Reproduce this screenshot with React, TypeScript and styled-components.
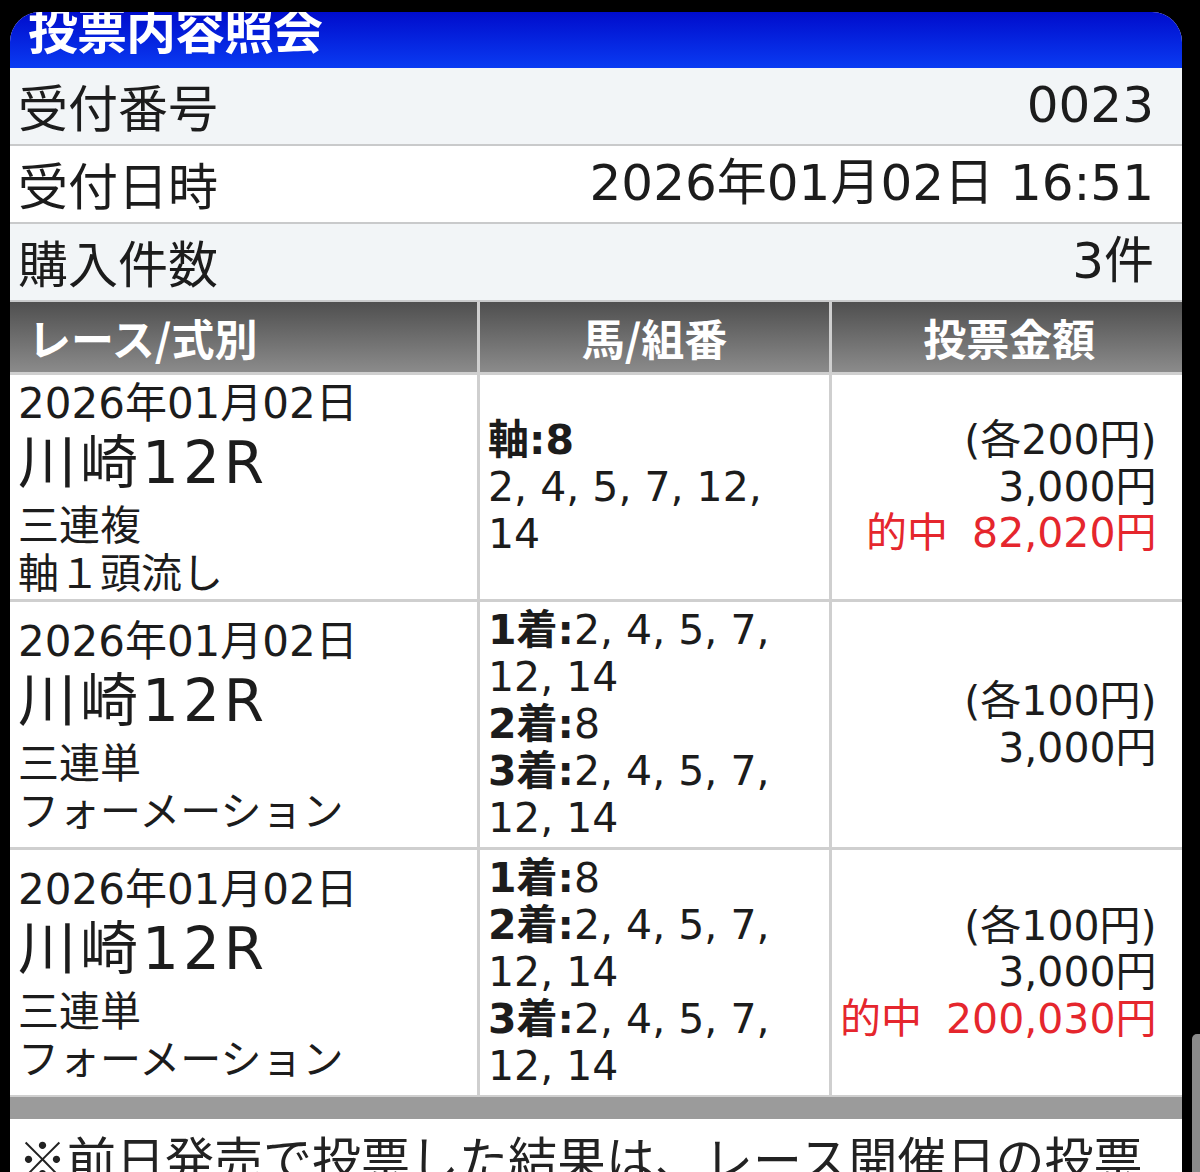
import React from "react";
import styled, { createGlobalStyle } from "styled-components";

const LATIN = `"DejaVu Sans", "Noto Sans CJK JP", sans-serif`;
const JP = `"Noto Sans CJK JP", sans-serif`;

const Global = createGlobalStyle`
  html, body {
    margin: 0;
    padding: 0;
    background: #000;
    overflow: hidden;
  }
  #root {
    height: 1172px;
    overflow: hidden;
  }
`;

const Screen = styled.div`
  position: relative;
  height: 1172px;
  padding: 12px 18px 0 10px;
  box-sizing: border-box;
  background: #000;
`;

const Panel = styled.div`
  width: 1172px;
  background: #fff;
  border-radius: 30px 30px 0 0;
  overflow: hidden;
  color: #1c1c1c;
`;

const TitleBar = styled.div`
  height: 56px;
  overflow: hidden;
  background: linear-gradient(#000ccc, #0a3bf2);
`;

const Title = styled.h1`
  margin: -11px 0 0 18px;
  font-family: ${JP};
  font-size: 50px;
  line-height: 52px;
  font-weight: 700;
  color: #fff;
  letter-spacing: -1px;
`;

const InfoRow = styled.div<{ $shade?: boolean }>`
  height: 76px;
  display: flex;
  align-items: center;
  justify-content: space-between;
  padding: 0 28px 0 8px;
  background: ${(p) => (p.$shade ? "#f2f5f7" : "#fff")};
  border-bottom: 2px solid #c9cacb;
`;

const InfoLabel = styled.span`
  font-family: ${JP};
  font-size: 50px;
  line-height: 1;
  margin-top: -3px;
`;

const InfoValue = styled.span`
  font-family: ${LATIN};
  font-size: 50px;
  line-height: 1;
  margin-top: -3px;
`;

const Table = styled.div`
  display: grid;
  grid-template-columns: 467px 349px 1fr;
  gap: 3px;
  background: #cfcfcf;
  border-bottom: 2px solid #cfcfcf;
`;

const HeadCell = styled.div<{ $align?: "left" | "center" }>`
  height: 70px;
  display: flex;
  align-items: center;
  justify-content: ${(p) => (p.$align === "left" ? "flex-start" : "center")};
  padding: 0 ${(p) => (p.$align === "left" ? "18px" : "0")};
  background: linear-gradient(#4f4f4f, #8b8b8b);
  font-family: ${JP};
  font-size: 43px;
  font-weight: 700;
  color: #fff;
`;

const Cell = styled.div<{ $align?: "left" | "right" }>`
  display: flex;
  flex-direction: column;
  justify-content: center;
  align-items: ${(p) => (p.$align === "right" ? "flex-end" : "flex-start")};
  background: #fff;
  padding: ${(p) => (p.$align === "right" ? "6px 30px 6px 8px" : "5px 8px")};
`;

const RaceDate = styled.div`
  font-family: ${LATIN};
  font-size: 42px;
  line-height: 48px;
`;

const RaceName = styled.div`
  font-family: ${LATIN};
  font-size: 58px;
  line-height: 70px;
  letter-spacing: 4px;
`;

const BetType = styled.div`
  font-family: ${JP};
  font-size: 41px;
  line-height: 48px;
`;

const PickLine = styled.div`
  font-family: ${LATIN};
  font-size: 41px;
  line-height: 47px;
`;

const PickKey = styled.b`
  font-weight: 700;
`;

const AmountLine = styled.div<{ $hit?: boolean }>`
  font-family: ${LATIN};
  font-size: 41px;
  line-height: 46.5px;
  color: ${(p) => (p.$hit ? "#e5262d" : "#1c1c1c")};
  white-space: nowrap;
`;

const HitLabel = styled.span`
  margin-right: 24px;
`;

const Band = styled.div`
  height: 22px;
  background: #9b9b9b;
`;

const Note = styled.p`
  margin: 0;
  padding: 4px 8px 0;
  font-family: ${JP};
  font-size: 49px;
  line-height: 68px;
  white-space: nowrap;
  color: #222;
`;

const ScrollThumb = styled.div`
  position: absolute;
  right: 0;
  top: 1034px;
  width: 8px;
  height: 160px;
  border-radius: 5px 0 0 5px;
  background: #8a8a8a;
`;

type Pick = { key?: string; nums?: string };

type Bet = {
  date: string;
  race: string;
  type: string;
  method: string;
  picks: Pick[];
  unit: string;
  total: string;
  payout?: string;
};

const bets: Bet[] = [
  {
    date: "2026年01月02日",
    race: "川崎12R",
    type: "三連複",
    method: "軸１頭流し",
    picks: [{ key: "軸:8" }, { nums: "2, 4, 5, 7, 12, 14" }],
    unit: "(各200円)",
    total: "3,000円",
    payout: "82,020円",
  },
  {
    date: "2026年01月02日",
    race: "川崎12R",
    type: "三連単",
    method: "フォーメーション",
    picks: [
      { key: "1着:", nums: "2, 4, 5, 7, 12, 14" },
      { key: "2着:", nums: "8" },
      { key: "3着:", nums: "2, 4, 5, 7, 12, 14" },
    ],
    unit: "(各100円)",
    total: "3,000円",
  },
  {
    date: "2026年01月02日",
    race: "川崎12R",
    type: "三連単",
    method: "フォーメーション",
    picks: [
      { key: "1着:", nums: "8" },
      { key: "2着:", nums: "2, 4, 5, 7, 12, 14" },
      { key: "3着:", nums: "2, 4, 5, 7, 12, 14" },
    ],
    unit: "(各100円)",
    total: "3,000円",
    payout: "200,030円",
  },
];

export default function App() {
  return (
    <>
      <Global />
      <Screen>
        <Panel>
          <TitleBar>
            <Title>投票内容照会</Title>
          </TitleBar>

          <InfoRow $shade>
            <InfoLabel>受付番号</InfoLabel>
            <InfoValue>0023</InfoValue>
          </InfoRow>
          <InfoRow>
            <InfoLabel>受付日時</InfoLabel>
            <InfoValue>2026年01月02日 16:51</InfoValue>
          </InfoRow>
          <InfoRow $shade>
            <InfoLabel>購入件数</InfoLabel>
            <InfoValue>3件</InfoValue>
          </InfoRow>

          <Table>
            <HeadCell $align="left">レース/式別</HeadCell>
            <HeadCell>馬/組番</HeadCell>
            <HeadCell>投票金額</HeadCell>

            {bets.map((bet, i) => (
              <React.Fragment key={i}>
                <Cell>
                  <RaceDate>{bet.date}</RaceDate>
                  <RaceName>{bet.race}</RaceName>
                  <BetType>{bet.type}</BetType>
                  <BetType>{bet.method}</BetType>
                </Cell>
                <Cell>
                  {bet.picks.map((p, j) => (
                    <PickLine key={j}>
                      {p.key && <PickKey>{p.key}</PickKey>}
                      {p.nums}
                    </PickLine>
                  ))}
                </Cell>
                <Cell $align="right">
                  <AmountLine>{bet.unit}</AmountLine>
                  <AmountLine>{bet.total}</AmountLine>
                  {bet.payout && (
                    <AmountLine $hit>
                      <HitLabel>的中</HitLabel>
                      {bet.payout}
                    </AmountLine>
                  )}
                </Cell>
              </React.Fragment>
            ))}
          </Table>

          <Band />
          <Note>※前日発売で投票した結果は、レース開催日の投票</Note>
        </Panel>
        <ScrollThumb />
      </Screen>
    </>
  );
}
